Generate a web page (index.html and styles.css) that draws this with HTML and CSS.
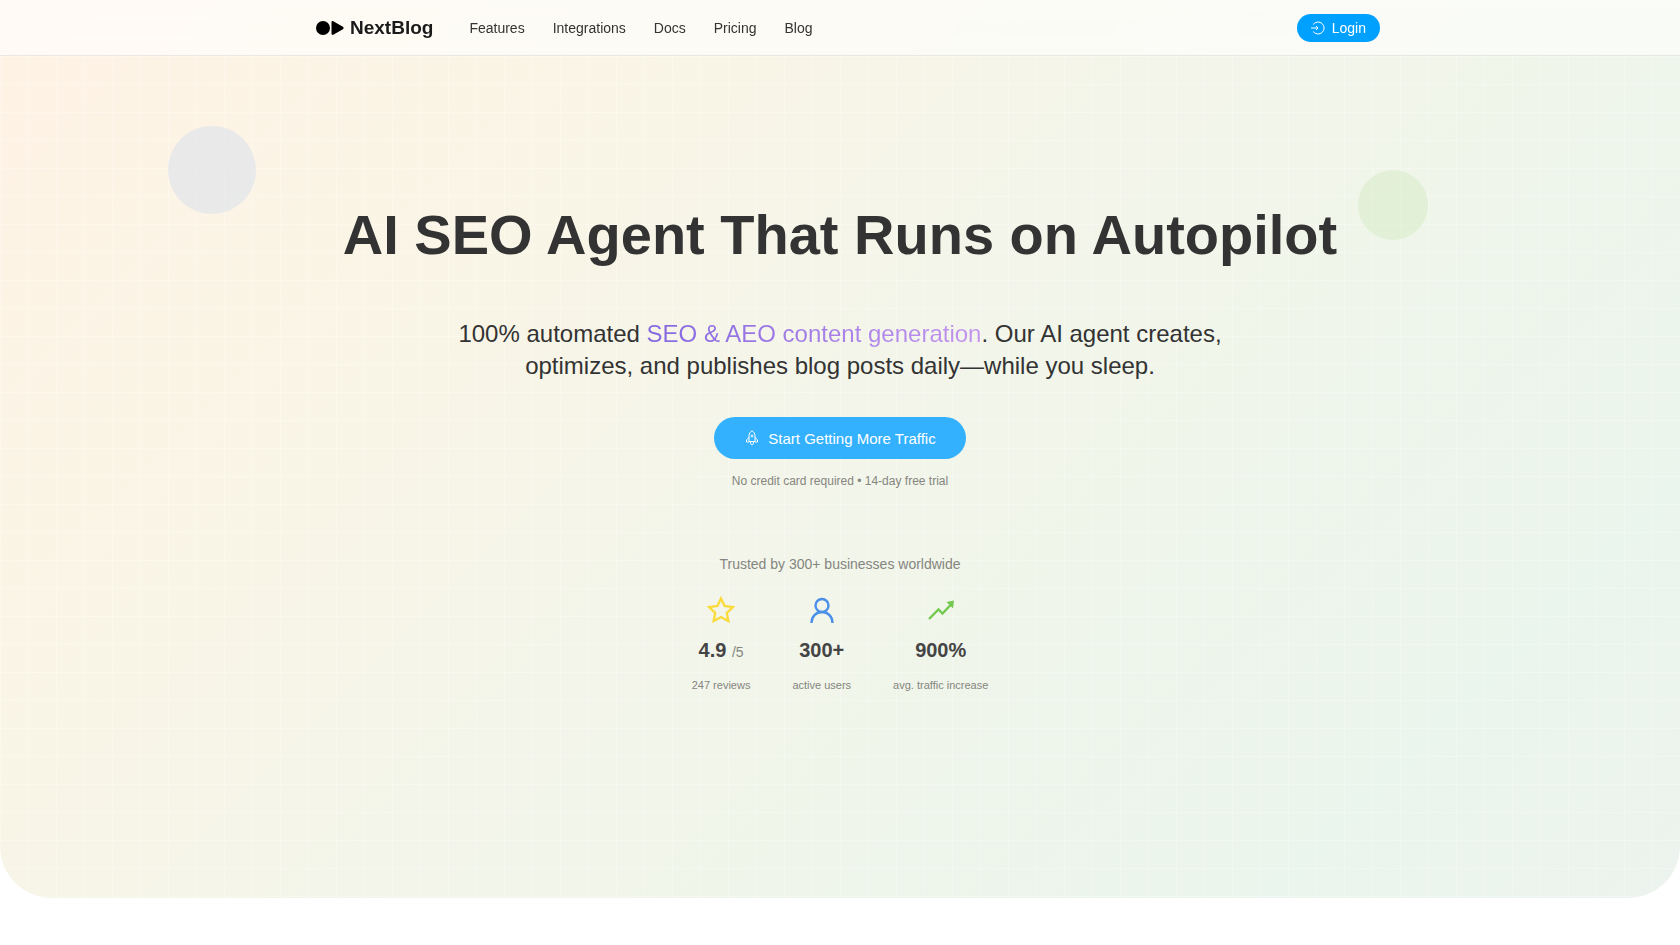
FILE: index.html
```html
<!DOCTYPE html>
<html lang="en">
<head>
    <meta charset="UTF-8">
    <meta name="viewport" content="width=device-width, initial-scale=1.0">
    <title>NextBlog</title>
    <link rel="stylesheet" href="styles.css">
</head>
<body>
    <header class="header">
        <div class="header-inner">
            <a class="logo" href="#">
                <svg class="logo-mark" viewBox="0 0 28 16" aria-hidden="true">
                    <circle cx="7" cy="8" r="7"/>
                    <path d="M15.500 2.200c0-1 1-1.400 1.800-1l9.600 5.600c1 .6 1 1.800 0 2.400l-9.600 5.600c-.8.4-1.800 0-1.800-1z"/>
                </svg>
                <span>NextBlog</span>
            </a>
            <nav class="nav">
                <a href="#">Features</a>
                <a href="#">Integrations</a>
                <a href="#">Docs</a>
                <a href="#">Pricing</a>
                <a href="#">Blog</a>
            </nav>
            <button class="login-btn" type="button">
                <svg viewBox="0 0 14 14" aria-hidden="true">
                    <path d="M2.300 3.400a6 6 0 1 1 0 7.200"/>
                    <path d="M0 7h7M5 5l2 2-2 2"/>
                </svg>
                Login
            </button>
        </div>
    </header>

    <main class="hero">
        <div class="shape shape-blue"></div>
        <div class="shape shape-green"></div>

        <h1 class="title">AI SEO Agent That Runs on Autopilot</h1>
        <p class="subtitle">
            100% automated <span class="highlight">SEO &amp; AEO content generation</span>. Our AI agent creates, optimizes, and publishes blog posts daily—while you sleep.
        </p>

        <button class="cta-btn" type="button">
            <svg viewBox="0 0 14 16" aria-hidden="true">
                <path d="M4 11.500V5.500C4 3.500 5.500 1.700 7 .8c1.500.9 3 2.700 3 4.700v6z"/>
                <path d="M4 7.500 1.500 9.800V12H4M10 7.500l2.500 2.300V12H10M5.500 12c0 1.500.5 2.500 1.500 3.200 1-.7 1.500-1.700 1.500-3.200"/>
                <circle cx="7" cy="6" r="1"/>
            </svg>
            Start Getting More Traffic
        </button>
        <p class="note">No credit card required • 14-day free trial</p>

        <section class="trust">
            <p class="trust-title">Trusted by 300+ businesses worldwide</p>
            <div class="stats">
                <div class="stat">
                    <svg class="icon-star" viewBox="0 0 28 28" aria-hidden="true">
                        <path d="M14 2.500l3.600 7.500 8.200 1.100-6 5.700 1.500 8.200-7.300-4-7.300 4 1.500-8.200-6-5.700L10.400 10z"/>
                    </svg>
                    <p class="stat-value">4.9 <span class="stat-scale">/5</span></p>
                    <p class="stat-label">247 reviews</p>
                </div>
                <div class="stat">
                    <svg class="icon-user" viewBox="0 0 28 28" aria-hidden="true">
                        <circle cx="14" cy="9.500" r="6.500"/>
                        <path d="M3.500 27c0-6.500 4.500-11 10.500-11s10.500 4.500 10.500 11"/>
                    </svg>
                    <p class="stat-value">300+</p>
                    <p class="stat-label">active users</p>
                </div>
                <div class="stat">
                    <svg class="icon-trend" viewBox="0 0 28 28" aria-hidden="true">
                        <path d="M2 23l9.500-9.500 4 4L24 8.500"/>
                        <path class="arrow" d="M19.500 6l7.500-1.500-1 8z"/>
                    </svg>
                    <p class="stat-value">900%</p>
                    <p class="stat-label">avg. traffic increase</p>
                </div>
            </div>
        </section>
    </main>
</body>
</html>
```
FILE: styles.css
```css
* {
    margin: 0;
    padding: 0;
    box-sizing: border-box;
}

body {
    background: #fff;
    color: #333;
    font-family: "Liberation Sans", Arial, sans-serif;
    font-size: 14px;
    line-height: 20px;
}

a {
    color: inherit;
    text-decoration: none;
}

button {
    border: none;
    color: white;
    font-family: inherit;
    cursor: pointer;
    display: flex;
    align-items: center;
    justify-content: center;
}

svg {
    fill: none;
    stroke: currentColor;
}

/* Header */
.header {
    position: fixed;
    top: 0;
    left: 0;
    right: 0;
    z-index: 10;
    height: 56px;
    padding: 0 16px 0 32px;
    background: rgba(255, 255, 255, 0.6);
    border-bottom: 1px solid rgba(0, 0, 0, 0.08);
    backdrop-filter: blur(8px);
}

.header-inner {
    max-width: 1064px;
    height: 100%;
    margin: 0 auto;
    display: flex;
    align-items: center;
}

.logo {
    display: flex;
    align-items: center;
    gap: 6px;
    color: #1a1a1a;
    font-size: 19px;
    font-weight: bold;
}

.logo-mark {
    width: 28px;
    height: 16px;
    fill: #000;
    stroke: none;
}

.nav {
    display: flex;
    gap: 28px;
    margin-left: 36px;
}

.login-btn {
    height: 28px;
    margin-left: auto;
    padding: 0 14px;
    gap: 7px;
    border-radius: 14px;
    background: #00a0ff;
    font-size: 14px;
}

.login-btn svg {
    width: 14px;
    height: 14px;
}

/* Hero */
.hero {
    position: relative;
    min-height: 95vh;
    padding: 200px 24px 80px;
    display: flex;
    flex-direction: column;
    align-items: center;
    text-align: center;
    border-radius: 0 0 52px 52px;
    background:
        linear-gradient(rgba(255, 255, 255, 0.25) 1px, transparent 1px) 0 0 / 28px 28px,
        linear-gradient(90deg, rgba(255, 255, 255, 0.25) 1px, transparent 1px) 0 0 / 28px 28px,
        linear-gradient(135deg, #fff2e5 0%, #faf5e6 25%, #f3f5ea 50%, #eff5ea 66%, #eaf5ed 84%, #edf3ee 100%);
}

.shape {
    position: absolute;
    border-radius: 50%;
}

.shape-blue {
    top: 126px;
    left: 10%;
    width: 88px;
    height: 88px;
    background: rgba(204, 218, 240, 0.4);
}

.shape-green {
    top: 170px;
    right: 15%;
    width: 70px;
    height: 70px;
    background: rgba(200, 232, 180, 0.35);
}

.title {
    font-size: 56px;
    line-height: 70px;
}

.subtitle {
    max-width: 800px;
    margin-top: 48px;
    font-size: 24px;
    line-height: 32px;
}

.highlight {
    background: linear-gradient(90deg, #8468e0, #c495ee);
    -webkit-background-clip: text;
    background-clip: text;
    color: transparent;
}

.cta-btn {
    height: 42px;
    margin-top: 35px;
    padding: 0 30px;
    gap: 8px;
    border-radius: 21px;
    background: #33b1ff;
    font-size: 15px;
}

.cta-btn svg {
    width: 16px;
    height: 16px;
}

.note {
    margin-top: 12px;
    font-size: 12px;
    color: #858580;
}

.trust {
    margin-top: 63px;
}

.trust-title {
    color: #858580;
}

.stats {
    margin-top: 22px;
    display: flex;
    justify-content: center;
    gap: 42px;
}

.stat {
    display: flex;
    flex-direction: column;
    align-items: center;
}

.stat svg {
    width: 28px;
    height: 28px;
    stroke-width: 2.4;
}

.icon-star {
    color: #fadb3c;
}

.icon-user {
    color: #4a8fe8;
}

.icon-trend {
    color: #73c94f;
}

.icon-trend .arrow {
    fill: currentColor;
    stroke: none;
}

.stat-value {
    margin-top: 13px;
    color: #444;
    font-size: 20px;
    font-weight: bold;
    line-height: 26px;
}

.stat-scale {
    color: #858580;
    font-size: 14px;
    font-weight: normal;
    line-height: 14px;
}

.stat-label {
    margin-top: 12px;
    color: #858580;
    font-size: 11px;
}

@media (max-width: 900px) {
    .nav {
        display: none;
    }

    .hero {
        padding-top: 120px;
    }

    .title {
        font-size: 36px;
        line-height: 44px;
    }
}
```
